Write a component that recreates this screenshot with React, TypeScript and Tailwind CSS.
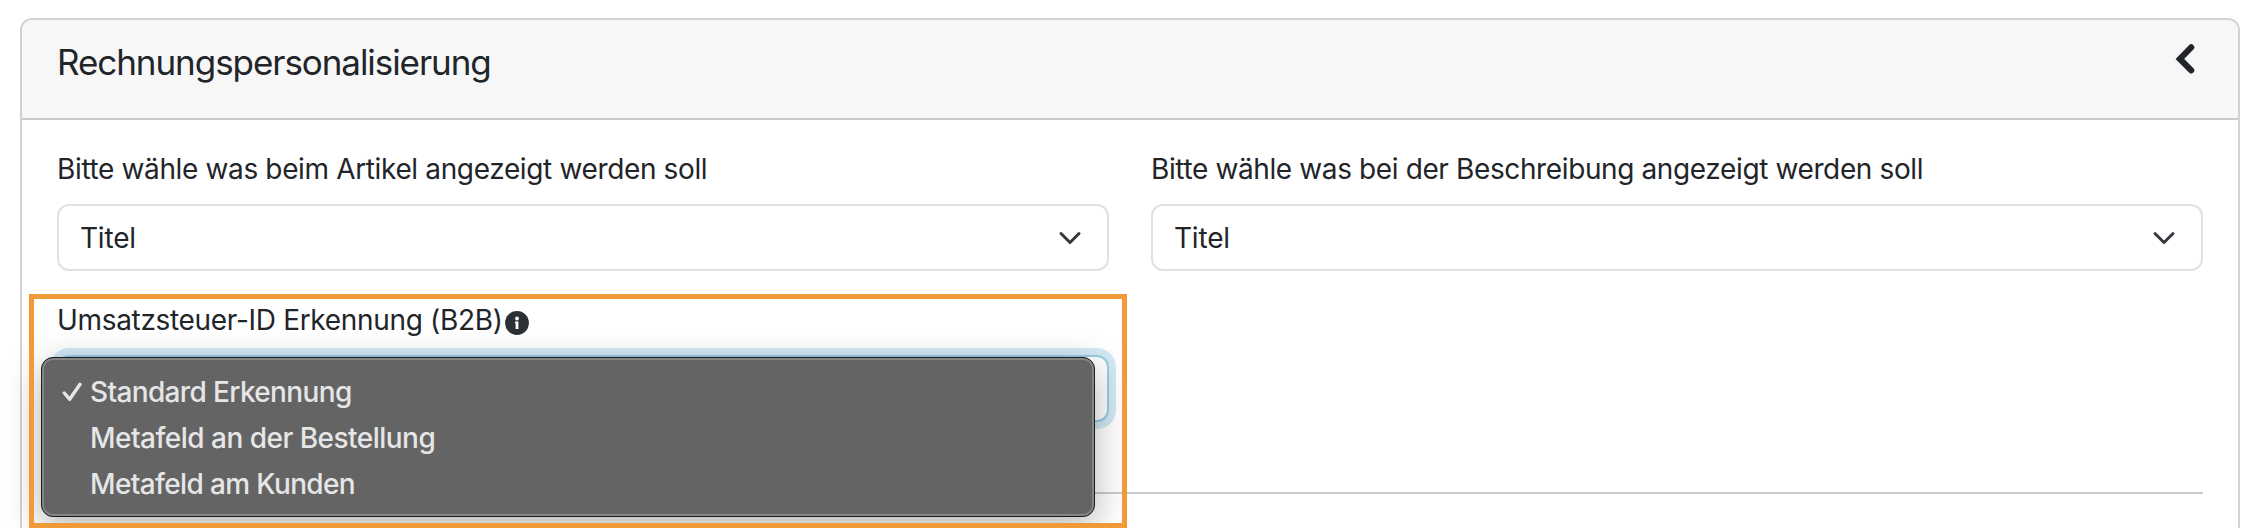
const displayFields = [
  { id: "article", label: "Bitte wähle was beim Artikel angezeigt werden soll", value: "Titel", spacing: "tracking-[-0.36px]" },
  { id: "description", label: "Bitte wähle was bei der Beschreibung angezeigt werden soll", value: "Titel", spacing: "tracking-[-0.38px]" },
];

const vatOptions = [
  { label: "Standard Erkennung", spacing: "tracking-[-0.64px]" },
  { label: "Metafeld an der Bestellung", spacing: "tracking-[-0.52px]" },
  { label: "Metafeld am Kunden", spacing: "tracking-[-0.64px]" },
];

function SelectArrow() {
  return (
    <svg className="size-6" viewBox="0 0 16 16" fill="none" stroke="#343a40" strokeWidth="2" strokeLinecap="round" strokeLinejoin="round">
      <path d="m2 5 6 6 6-6" />
    </svg>
  );
}

function CollapseIcon() {
  return (
    <svg className="mt-[2px]" width="20" height="32" viewBox="0 0 20 32" fill="none" stroke="currentColor" strokeWidth="6.2" strokeLinecap="round">
      <path d="M16.2 4.4 4.9 15.9 16.2 27.4" />
    </svg>
  );
}

function InfoIcon() {
  return (
    <svg className="mt-[6px] ml-[2px]" width="24" height="24" viewBox="0 0 24 24">
      <circle cx="12" cy="12" r="11.9" fill="#2b3035" />
      <circle cx="12" cy="7.5" r="1.9" fill="#fff" />
      <path d="M10 10.5h3.4v7.6h-2.8v-6H10z" fill="#fff" />
    </svg>
  );
}

function SelectField({ label, value, spacing }: { label: string; value: string; spacing: string }) {
  return (
    <div>
      <div className={`leading-[42px] whitespace-nowrap ${spacing}`}>{label}</div>
      <div className="mt-[14px] flex h-[67px] items-center justify-between rounded-[12px] border-2 border-[#dee2e6] bg-white pr-[25px] pl-[21px]">
        <span className="tracking-[-0.2px]">{value}</span>
        <SelectArrow />
      </div>
    </div>
  );
}

function VatOptionsMenu({ selected }: { selected: string }) {
  return (
    <ul className="absolute top-0 left-[-18px] h-[160px] w-[1054px] rounded-[12px] border border-[#1c1c1c] bg-[#646464] pt-[11px] text-[#e6e6e6] shadow-[inset_0_0_0_2px_#858585,0_10px_36px_rgba(0,0,0,0.3)]">
      {vatOptions.map(({ label, spacing }) => (
        <li key={label} className={`flex h-[46px] items-center pl-[20px] font-[450] whitespace-nowrap ${spacing}`}>
          <span className="w-[28px]">
            {label === selected && (
              <svg width="20" height="20" viewBox="0 0 20 20" fill="none" stroke="currentColor" strokeWidth="3.4" strokeLinecap="round" strokeLinejoin="round">
                <path d="M2.3 11 7.7 17.3 18 2.3" />
              </svg>
            )}
          </span>
          {label}
        </li>
      ))}
    </ul>
  );
}

export default function App() {
  return (
    <div className="relative h-[528px] w-[2256px] overflow-hidden bg-white pt-[18px] pr-[16px] pl-[20px] font-['Inter','Liberation_Sans',sans-serif] text-[28px] text-[#212529]">
      <div className="h-[560px] rounded-[12px] border-2 border-[#d2d2d2]">
        <div className="flex h-[100px] items-start justify-between rounded-t-[10px] border-b-2 border-[#cacaca] bg-[#f7f7f7] pt-[21px] pr-[43px] pl-[35px]">
          <h5 className="text-[35px] leading-[42px] tracking-[-1.06px]">Rechnungspersonalisierung</h5>
          <CollapseIcon />
        </div>
        <div className="px-[35px] pt-[28px]">
          <div className="grid grid-cols-2 gap-x-[42px] gap-y-[28px]">
            {displayFields.map((field) => (
              <SelectField key={field.id} label={field.label} value={field.value} spacing={field.spacing} />
            ))}
            <div>
              <div className="flex items-center leading-[42px] tracking-[-0.32px] whitespace-nowrap">
                Umsatzsteuer-ID Erkennung (B2B)
                <InfoIcon />
              </div>
              <div className="relative mt-[14px] h-[67px] rounded-[12px] border-2 border-[#98cde4] bg-white shadow-[0_0_0_7px_#d3e9f5]">
                <VatOptionsMenu selected="Standard Erkennung" />
              </div>
            </div>
          </div>
          <hr className="mt-[70px] border-t-2 border-[#c8ccd1]" />
        </div>
      </div>
      <div className="absolute top-[294px] left-[29px] h-[234px] w-[1098px] border-[5px] border-[#f19a37]" />
    </div>
  );
}
